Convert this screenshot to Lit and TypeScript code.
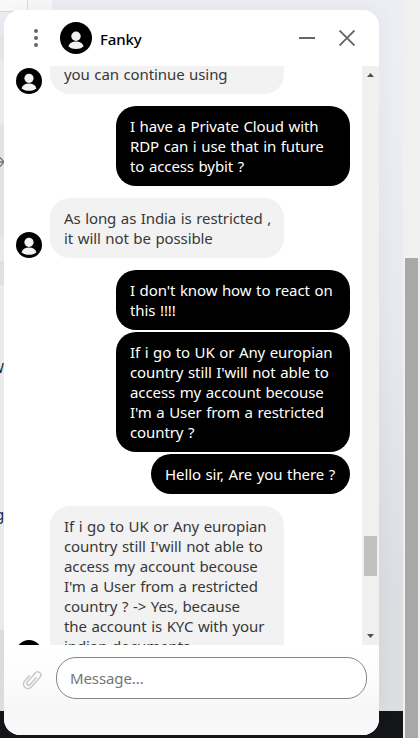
import { LitElement, html, css, svg } from "lit";
import { customElement, property } from "lit/decorators.js";
import { classMap } from "lit/directives/class-map.js";

interface Message {
  own: boolean;
  lines: string[];
  kind?: string;
}

const MESSAGES: Message[] = [
  { own: false, lines: ["you can continue using"], kind: "cut" },
  { own: true, lines: ["I have a Private Cloud with", "RDP can i use that in future", "to access bybit ?"] },
  { own: false, lines: ["As long as India is restricted ,", "it will not be possible"] },
  { own: true, lines: ["I don't know how to react on", "this !!!!"] },
  {
    own: true,
    kind: "joined",
    lines: [
      "If i go to UK or Any europian",
      "country still I'will not able to",
      "access my account becouse",
      "I'm a User from a restricted",
      "country ?",
    ],
  },
  { own: true, kind: "joined short", lines: ["Hello sir, Are you there ?"] },
  {
    own: false,
    kind: "last",
    lines: [
      "If i go to UK or Any europian",
      "country still I'will not able to",
      "access my account becouse",
      "I'm a User from a restricted",
      "country ? -> Yes, because",
      "the account is KYC with your",
      "indian documents",
    ],
  },
];

@customElement("user-avatar")
export class UserAvatar extends LitElement {
  @property({ type: Boolean }) large = false;
  static styles = css`
    :host { display: block; flex: none; width: 26px; height: 26px; }
    svg { display: block; width: 100%; height: 100%; }
  `;
  render() {
    return html`<svg viewBox="0 0 32 32">
      <circle cx="16" cy="16" r="16" fill="#000" />
      <g fill="#f2f2f2" transform=${this.large ? "translate(0 0)" : "translate(-3.2 -4.3) scale(1.2)"}>
        <circle cx="16" cy="14.2" r="4.7" />
        <path d="M8.400 24.500c.8-3.300 3.600-4.900 7.600-4.900s6.800 1.600 7.600 4.900c-2.100 1.700-4.600 2.500-7.600 2.500s-5.500-.8-7.600-2.500z" />
      </g>
    </svg>`;
  }
}

@customElement("chat-message")
export class ChatMessage extends LitElement {
  @property({ attribute: false }) message!: Message;
  static styles = css`
    :host { display: block; }
    .row { display: flex; align-items: flex-end; gap: 8px; padding: 0 12px; margin-top: 12px; }
    .own { justify-content: flex-end; }
    .joined { margin-top: 2px; }
    .bubble {
      box-sizing: border-box; width: 234px; padding: 10px 0 10px 14px; border-radius: 20px;
      background: #f2f2f2; color: #383838; font-size: 15px; line-height: 20px;
      letter-spacing: -0.1px; word-spacing: 0.8px; white-space: nowrap;
    }
    .own .bubble { background: #000; color: #fff; }
    .short .bubble { width: 199px; }
    .cut { margin-top: 0; }
    .cut .bubble { height: 28px; padding-top: 0; border-radius: 0 0 20px 20px; }
    .cut .line { margin-top: -2px; }
    .last .bubble { height: 160px; }
    .line { height: 20px; }
  `;
  render() {
    const m = this.message;
    const kinds: Record<string, boolean> = { row: true, own: m.own };
    for (const k of (m.kind ?? "").split(" ").filter(Boolean)) kinds[k] = true;
    return html`<div class=${classMap(kinds)}>
      ${m.own ? "" : html`<user-avatar></user-avatar>`}
      <div class="bubble">${m.lines.map((l) => html`<div class="line">${l}</div>`)}</div>
    </div>`;
  }
}

@customElement("app-root")
export class AppRoot extends LitElement {
  static styles = css`
    :host {
      display: block; position: relative; width: 420px; height: 738px; overflow: hidden;
      font-family: "Noto Sans", "Open Sans", sans-serif;
    }
    .page { display: flex; height: 738px; }
    .content { flex: 1; display: flex; flex-direction: column; background: linear-gradient(#eff0f5, #e7e9ee 45%, #dcdee3 80%, #dddee0); }
    .top { display: flex; flex: none; height: 36px; background: #edeef3; }
    .corner { box-sizing: border-box; width: 28px; height: 12px; border: solid #d9dade; border-width: 0 1px 1px 0; background: #fafafa; }
    .pale { width: 24px; height: 36px; background: #f8f8f9; }
    .band { flex: none; width: 4px; }
    .side { flex: 1; display: flex; flex-direction: column; min-height: 0; overflow: hidden; }
    .foot { flex: none; height: 27px; background: #131519; }
    .bar { width: 17px; background: #f0f0f0; display: flex; flex-direction: column; padding-top: 258px; box-sizing: border-box; }
    .bar-thumb { flex: 1; width: 13px; margin-left: 2px; background: #a8a8a8; }
    .b1 { height: 24px; background: #e9eaee; }
    .b2 { height: 64px; background: #f0f0f1; }
    .b3 { height: 113px; background: #e7e8eb; }
    .b4 { height: 24px; background: #efeff0; }
    .b5 { height: 24px; background: #e5e6e9; }
    .b6 { height: 345px; background: #efefef; }
    .b7 { height: 81px; background: #e0e1e5; }
    .edge { position: absolute; left: 0; width: 4px; height: 20px; overflow: hidden; font-size: 14px; line-height: 20px; color: #111a30; direction: rtl; white-space: nowrap; }
    .arrow { top: 152px; color: #73757c; }
    .arrow svg { display: block; }
    .w { top: 358px; }
    .g { top: 505px; }
    .chat {
      position: absolute; left: 4px; top: 10px; width: 375px; height: 725px; overflow: hidden;
      display: flex; flex-direction: column; border-radius: 16px; background: #fff;
    }
    .shade { position: absolute; left: 4px; top: 10px; width: 375px; height: 701px; border-radius: 16px 16px 0 0; box-shadow: 0 0 20px rgba(60, 65, 75, 0.07); }
    header { flex: none; height: 56px; display: flex; align-items: center; padding: 0 24px 0 30px; box-sizing: border-box; }
    header svg { display: block; flex: none; }
    header user-avatar { width: 32px; height: 32px; margin-left: 22px; }
    .name { margin-left: 8px; padding-top: 2px; flex: 1; font-size: 15px; line-height: 20px; font-weight: 500; letter-spacing: -0.15px; color: #000; }
    .close { margin-left: 24px; }
    .body { flex: none; height: 579px; display: flex; overflow: hidden; }
    .list { width: 358px; overflow: hidden; }
    .scroll { width: 17px; background: #f0f0f0; display: flex; flex-direction: column; align-items: center; }
    .scroll-thumb { width: 13px; height: 40px; margin: 453px 0 52px; background: #c1c1c1; }
    .scroll svg { display: block; width: 17px; height: 17px; flex: none; }
    footer { flex: 1; display: flex; align-items: flex-start; padding: 12px 12px 0 18px; background: linear-gradient(#fff 0%, #fbfbfb 45%, #f6f6f6 75%, #fafafa); }
    .clip { display: block; flex: none; width: 20px; height: 22px; margin: 11px 14px 0 0; }
    .input {
      box-sizing: border-box; flex: 1; height: 42px; padding-left: 13px; border: 1px solid #858585; border-radius: 20px;
      background: #fff; color: #757575; font-size: 15px; line-height: 41px; letter-spacing: -0.1px;
    }
  `;

  render() {
    return html`
      <div class="page">
        <div class="content">
          <div class="top"><div class="corner"></div><div class="pale"></div></div>
          <div class="side">
            ${[1, 2, 3, 4, 5, 6, 7].map((n) => html`<div class="band b${n}"></div>`)}
          </div>
          <div class="foot"></div>
        </div>
        <div class="bar"><div class="bar-thumb"></div></div>
      </div>
      <div class="edge arrow">
        <svg width="4" height="20" viewBox="0 0 4 20">${svg`<path d="M0 10h4M0 5.500l4 4.500-4 4.500" fill="none" stroke="currentColor" stroke-width="1.300"/>`}</svg>
      </div>
      <div class="edge w">W</div>
      <div class="edge g">g</div>
      <div class="shade"></div>
      <div class="chat">
        <header>
          <svg width="4" height="20" viewBox="0 0 4 20" fill="#666">
            <circle cx="2" cy="3" r="2" /><circle cx="2" cy="10" r="2" /><circle cx="2" cy="17" r="2" />
          </svg>
          <user-avatar large></user-avatar>
          <div class="name">Fanky</div>
          <svg width="16" height="16" viewBox="0 0 16 16"><path d="M0 7h16v2H0z" fill="#666" /></svg>
          <svg class="close" width="16" height="16" viewBox="0 0 16 16"><path d="M.5.5l15 15M15.500.5l-15 15" stroke="#666" stroke-width="1.900" /></svg>
        </header>
        <div class="body">
          <div class="list">${MESSAGES.map((m) => html`<chat-message .message=${m}></chat-message>`)}</div>
          <div class="scroll">
            <svg viewBox="0 0 17 17"><path d="M5 11l3.500-4 3.500 4z" fill="#505050" /></svg>
            <div class="scroll-thumb"></div>
            <svg viewBox="0 0 17 17"><path d="M5 6l3.500 4 3.500-4z" fill="#505050" /></svg>
          </div>
        </div>
        <footer>
          <svg class="clip" viewBox="0 0 20 22" fill="none" stroke="#c8c8c8" stroke-width="1.500" stroke-linecap="round">
            <path transform="translate(10 11.500) rotate(42)" d="M-4.500-1V6a4.500 4.500 0 0 0 9 0V-7a3.200 3.200 0 0 0-6.400 0V5a1.900 1.900 0 0 0 3.800 0V-4" />
          </svg>
          <div class="input">Message...</div>
        </footer>
      </div>
    `;
  }
}
